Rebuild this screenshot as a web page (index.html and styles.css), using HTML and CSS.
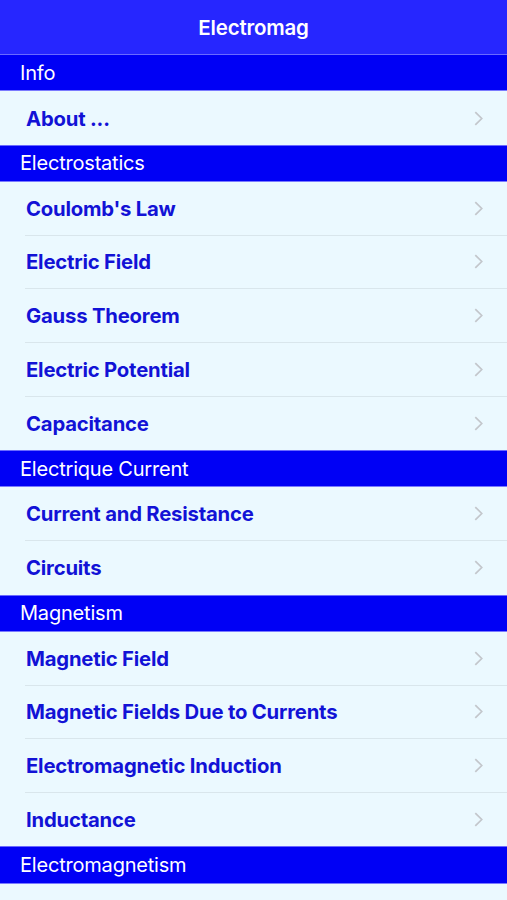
FILE: index.html
```html
<!DOCTYPE html>
<html lang="en">
  <head>
    <meta charset="UTF-8" />
    <meta name="viewport" content="width=device-width, initial-scale=1.0" />
    <title>Electromag</title>
    <link rel="stylesheet" href="styles.css">
  </head>
  <body>
    <div class="nav-bar">Electromag</div>
    <div class="list">
      <div class="section">Info</div>
      <div class="group">
        <div class="row"><span>About ...</span><svg class="chev" viewBox="0 0 8 14"><path d="M1 1l6 6-6 6"/></svg></div>
      </div>

      <div class="section">Electrostatics</div>
      <div class="group">
        <div class="row"><span>Coulomb's Law</span><svg class="chev" viewBox="0 0 8 14"><path d="M1 1l6 6-6 6"/></svg></div>
        <div class="row"><span>Electric Field</span><svg class="chev" viewBox="0 0 8 14"><path d="M1 1l6 6-6 6"/></svg></div>
        <div class="row"><span>Gauss Theorem</span><svg class="chev" viewBox="0 0 8 14"><path d="M1 1l6 6-6 6"/></svg></div>
        <div class="row"><span>Electric Potential</span><svg class="chev" viewBox="0 0 8 14"><path d="M1 1l6 6-6 6"/></svg></div>
        <div class="row"><span>Capacitance</span><svg class="chev" viewBox="0 0 8 14"><path d="M1 1l6 6-6 6"/></svg></div>
      </div>

      <div class="section">Electrique Current</div>
      <div class="group">
        <div class="row"><span>Current and Resistance</span><svg class="chev" viewBox="0 0 8 14"><path d="M1 1l6 6-6 6"/></svg></div>
        <div class="row"><span>Circuits</span><svg class="chev" viewBox="0 0 8 14"><path d="M1 1l6 6-6 6"/></svg></div>
      </div>

      <div class="section">Magnetism</div>
      <div class="group">
        <div class="row"><span>Magnetic Field</span><svg class="chev" viewBox="0 0 8 14"><path d="M1 1l6 6-6 6"/></svg></div>
        <div class="row"><span>Magnetic Fields Due to Currents</span><svg class="chev" viewBox="0 0 8 14"><path d="M1 1l6 6-6 6"/></svg></div>
        <div class="row"><span>Electromagnetic Induction</span><svg class="chev" viewBox="0 0 8 14"><path d="M1 1l6 6-6 6"/></svg></div>
        <div class="row"><span>Inductance</span><svg class="chev" viewBox="0 0 8 14"><path d="M1 1l6 6-6 6"/></svg></div>
      </div>

      <div class="section">Electromagnetism</div>
      <div class="group">
        <div class="row"></div>
      </div>
    </div>
  </body>
</html>
```

FILE: styles.css
```css
* {
  padding: 0;
  margin: 0;
  box-sizing: border-box;
}
body {
  font-family: Inter, "Liberation Sans", sans-serif;
  background: #ebf9ff;
  height: 900px;
  overflow: hidden;
}
.nav-bar {
  height: 54px;
  background: #2626ff;
  color: #ffffff;
  font-size: 20.5px;
  font-weight: 600;
  display: flex;
  justify-content: center;
  align-items: center;
  letter-spacing: -0.2px;
}
.section {
  height: 37.2px;
  background: #0000f5;
  color: #ffffff;
  font-size: 20px;
  padding-left: 20px;
  display: flex;
  align-items: center;
  border-top: 1px solid #6a6aff;
  border-bottom: 1px solid #7a7aff;
  letter-spacing: -0.2px;
}
.group {
  background: #ebf9ff;
}
.row {
  height: 53.65px;
  margin-left: 25px;
  padding-right: 24px;
  display: flex;
  align-items: center;
  justify-content: space-between;
  border-bottom: 1px solid #d9e6ec;
  color: #1212d6;
  font-size: 20.3px;
  font-weight: 700;
  letter-spacing: -0.2px;
}
.row span {
  margin-left: 1px;
}
.row:last-child {
  border-bottom: none;
}
.chev {
  width: 9px;
  height: 15px;
  fill: none;
  stroke: #c3c7cc;
  stroke-width: 1.6;
}
```
